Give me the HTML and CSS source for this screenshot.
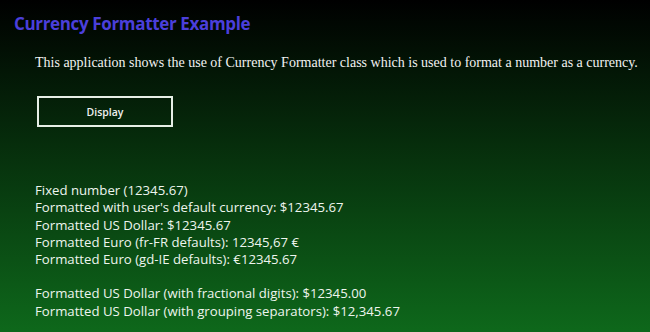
FILE: index.html
```html
<!DOCTYPE html>
<html>
<head>
<meta charset="utf-8">
<link rel="stylesheet" href="styles.css">
</head>
<body>
<div class="page">
  <h1 class="title">Currency Formatter Example</h1>
  <p class="desc">This application shows the use of Currency Formatter class which is used to format a number as a currency.</p>
  <button class="btn">Display</button>
  <div class="output">
    <div class="group">
      <div>Fixed number (12345.67)</div>
      <div>Formatted with user's default currency: $12345.67</div>
      <div>Formatted US Dollar: $12345.67</div>
      <div>Formatted Euro (fr-FR defaults): 12345,67 €</div>
      <div>Formatted Euro (gd-IE defaults): €12345.67</div>
    </div>
    <div class="group">
      <div>Formatted US Dollar (with fractional digits): $12345.00</div>
      <div>Formatted US Dollar (with grouping separators): $12,345.67</div>
    </div>
  </div>
</div>
</body>
</html>
```
FILE: styles.css
```css
html, body {
  margin: 0;
  padding: 0;
  width: 650px;
  height: 332px;
  overflow: hidden;
}
body {
  background: linear-gradient(to bottom, #000000 0%, #0e681b 100%);
  color: #ffffff;
}
.page {
  padding: 12px 0 0 14px;
  display: flex;
  flex-direction: column;
  align-items: flex-start;
}
.title {
  margin: 0;
  font-family: "Open Sans", sans-serif;
  font-weight: 700;
  font-size: 17px;
  line-height: 24px;
  color: #4b3fdb;
  letter-spacing: -0.35px;
}
.desc {
  margin: 18px 0 0 21px;
  font-family: "Liberation Serif", serif;
  font-size: 14px;
  line-height: 17px;
  color: #f2f2f2;
}
.btn {
  margin: 25px 0 0 23px;
  width: 136px;
  height: 31px;
  background: transparent;
  border: 2px solid #e6efe6;
  color: #f0f0f0;
  font-family: "Open Sans", sans-serif;
  font-weight: 600;
  font-size: 10.5px;
  padding: 0;
}
.output {
  margin: 55px 0 0 21px;
  font-family: "Open Sans", sans-serif;
  font-size: 13.2px;
  line-height: 17.3px;
  color: #eef5ee;
  display: flex;
  flex-direction: column;
  gap: 17px;
}
```
